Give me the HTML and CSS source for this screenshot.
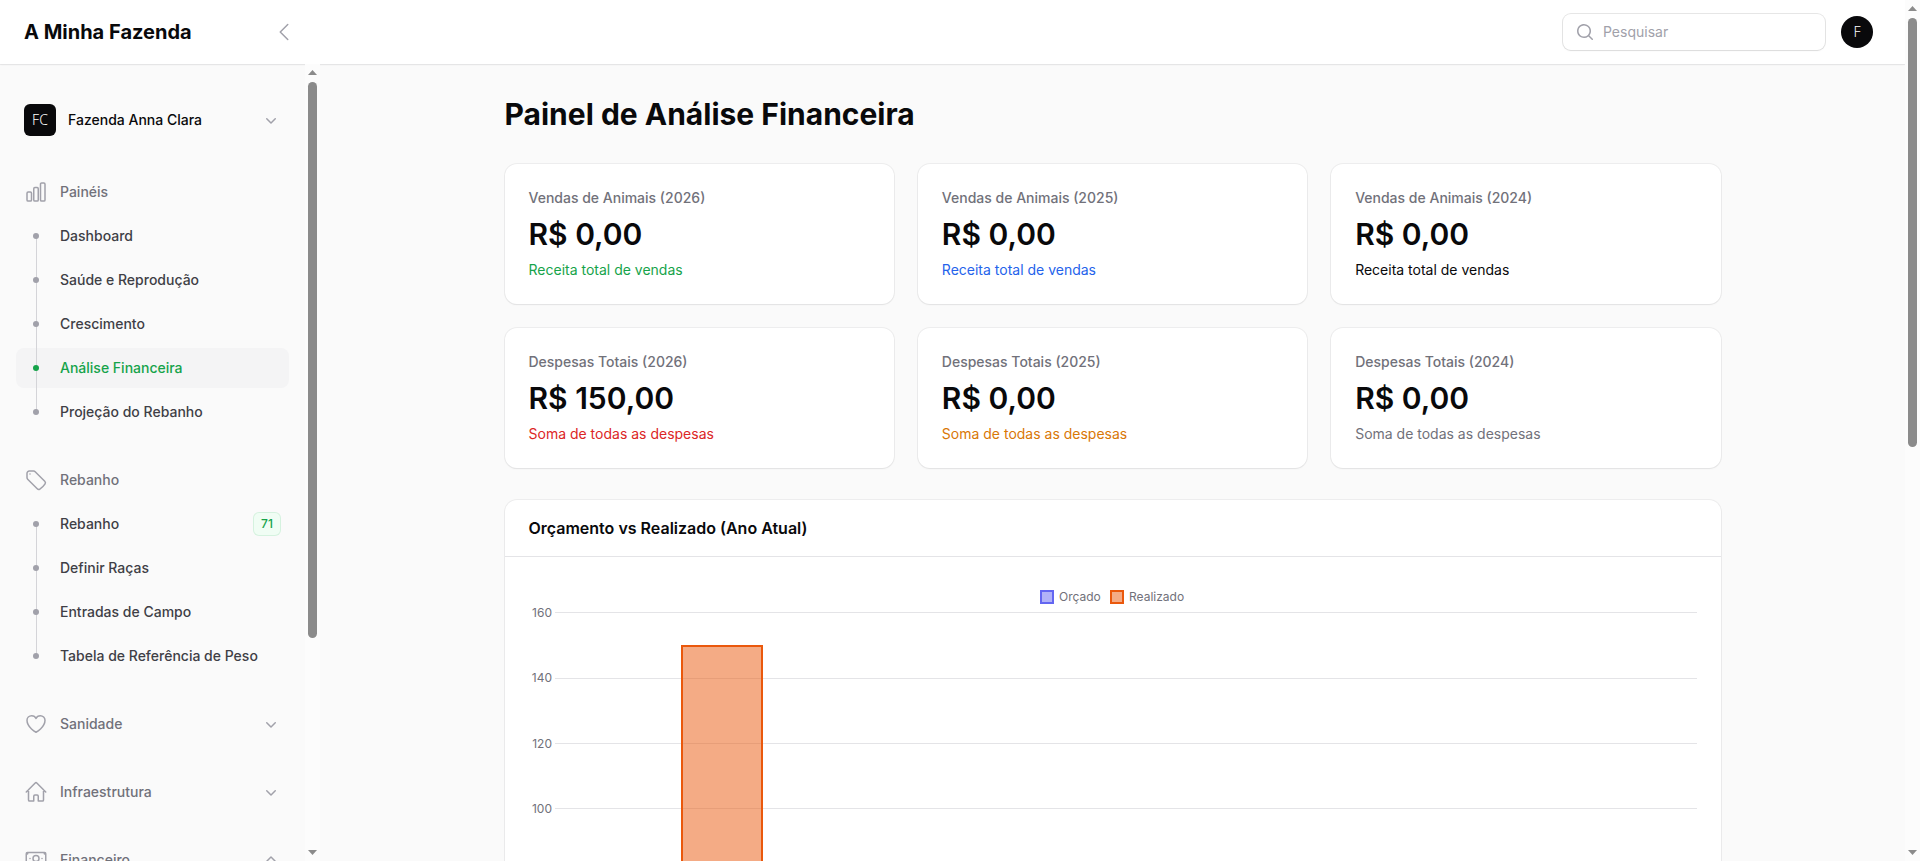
FILE: index.html
```html
<!DOCTYPE html>
<html lang="pt-BR">
<head>
<meta charset="utf-8">
<meta name="viewport" content="width=device-width, initial-scale=1">
<title>Painel de Análise Financeira - A Minha Fazenda</title>
<link rel="stylesheet" href="styles.css">
</head>
<body>
<svg class="sprite" aria-hidden="true">
  <symbol id="chevron-down" viewBox="0 0 20 20"><path fill="currentColor" d="M5.22 8.22a.75.75 0 0 1 1.06 0L10 11.94l3.72-3.72a.75.75 0 1 1 1.06 1.06l-4.25 4.25a.75.75 0 0 1-1.06 0L5.22 9.28a.75.75 0 0 1 0-1.06Z"/></symbol>
</svg>
<div class="app">
  <header class="topbar">
    <div class="brand">
      <a class="brand-name" href="#">A Minha Fazenda</a>
      <button class="icon-button" type="button" aria-label="Recolher barra lateral">
        <svg class="icon-lg" viewBox="0 0 24 24" fill="none" stroke="currentColor" stroke-width="1.5" stroke-linecap="round" stroke-linejoin="round"><path d="M15.75 19.5 8.25 12l7.5-7.5"/></svg>
      </button>
    </div>
    <div class="topbar-end">
      <label class="search">
        <svg class="icon-sm" viewBox="0 0 20 20" fill="currentColor"><path fill-rule="evenodd" d="M9 3.5a5.5 5.5 0 1 0 0 11 5.5 5.5 0 0 0 0-11ZM2 9a7 7 0 1 1 12.452 4.391l3.328 3.329a.75.75 0 1 1-1.06 1.06l-3.329-3.328A7 7 0 0 1 2 9Z"/></svg>
        <input class="search-input" type="search" placeholder="Pesquisar" aria-label="Pesquisar">
      </label>
      <button class="avatar avatar-round" type="button" aria-label="Menu do usuário">F</button>
    </div>
  </header>
  <div class="body">
    <aside class="sidebar">
      <nav class="nav">
        <button class="tenant" type="button">
          <span class="avatar">FC</span>
          <span class="grow">Fazenda Anna Clara</span>
          <svg class="icon-sm"><use href="#chevron-down"/></svg>
        </button>

        <section class="group">
          <div class="group-label">
            <svg class="icon-lg" viewBox="0 0 24 24" fill="none" stroke="currentColor" stroke-width="1.5" stroke-linecap="round" stroke-linejoin="round"><path d="M3 13.125C3 12.504 3.504 12 4.125 12h2.25c.621 0 1.125.504 1.125 1.125v6.75C7.5 20.496 6.996 21 6.375 21h-2.25A1.125 1.125 0 0 1 3 19.875v-6.75ZM9.75 8.625c0-.621.504-1.125 1.125-1.125h2.25c.621 0 1.125.504 1.125 1.125v11.25c0 .621-.504 1.125-1.125 1.125h-2.25a1.125 1.125 0 0 1-1.125-1.125V8.625ZM16.5 4.125c0-.621.504-1.125 1.125-1.125h2.25C20.496 3 21 3.504 21 4.125v15.75c0 .621-.504 1.125-1.125 1.125h-2.25a1.125 1.125 0 0 1-1.125-1.125V4.125Z"/></svg>
            <span class="grow">Painéis</span>
          </div>
          <ul class="items">
            <li><a class="item" href="#"><span class="rail"></span>Dashboard</a></li>
            <li><a class="item" href="#"><span class="rail"></span>Saúde e Reprodução</a></li>
            <li><a class="item" href="#"><span class="rail"></span>Crescimento</a></li>
            <li><a class="item item-active" href="#" aria-current="page"><span class="rail"></span>Análise Financeira</a></li>
            <li><a class="item" href="#"><span class="rail"></span>Projeção do Rebanho</a></li>
          </ul>
        </section>

        <section class="group">
          <div class="group-label">
            <svg class="icon-lg" viewBox="0 0 24 24" fill="none" stroke="currentColor" stroke-width="1.5" stroke-linecap="round" stroke-linejoin="round"><path d="M9.568 3H5.25A2.25 2.25 0 0 0 3 5.25v4.318c0 .597.237 1.17.659 1.591l9.581 9.581c.699.699 1.78.872 2.607.33a18.095 18.095 0 0 0 5.223-5.223c.542-.827.369-1.908-.33-2.607L11.16 3.66A2.25 2.25 0 0 0 9.568 3Z"/><path d="M6 6h.008v.008H6V6Z"/></svg>
            <span class="grow">Rebanho</span>
          </div>
          <ul class="items">
            <li><a class="item" href="#"><span class="rail"></span><span class="grow">Rebanho</span><span class="badge">71</span></a></li>
            <li><a class="item" href="#"><span class="rail"></span>Definir Raças</a></li>
            <li><a class="item" href="#"><span class="rail"></span>Entradas de Campo</a></li>
            <li><a class="item" href="#"><span class="rail"></span>Tabela de Referência de Peso</a></li>
          </ul>
        </section>

        <button class="group-label" type="button">
          <svg class="icon-lg" viewBox="0 0 24 24" fill="none" stroke="currentColor" stroke-width="1.5" stroke-linecap="round" stroke-linejoin="round"><path d="M21 8.25c0-2.485-2.099-4.5-4.688-4.5-1.935 0-3.597 1.126-4.312 2.733-.715-1.607-2.377-2.733-4.313-2.733C5.1 3.75 3 5.765 3 8.25c0 7.22 9 12 9 12s9-4.78 9-12Z"/></svg>
          <span class="grow">Sanidade</span>
          <svg class="icon-sm"><use href="#chevron-down"/></svg>
        </button>
        <button class="group-label" type="button">
          <svg class="icon-lg" viewBox="0 0 24 24" fill="none" stroke="currentColor" stroke-width="1.5" stroke-linecap="round" stroke-linejoin="round"><path d="m2.25 12 8.954-8.955c.44-.439 1.152-.439 1.591 0L21.75 12M4.5 9.75v10.125c0 .621.504 1.125 1.125 1.125H9.75v-4.875c0-.621.504-1.125 1.125-1.125h2.25c.621 0 1.125.504 1.125 1.125V21h4.125c.621 0 1.125-.504 1.125-1.125V9.75"/></svg>
          <span class="grow">Infraestrutura</span>
          <svg class="icon-sm"><use href="#chevron-down"/></svg>
        </button>
        <button class="group-label" type="button" aria-expanded="true">
          <svg class="icon-lg" viewBox="0 0 24 24" fill="none" stroke="currentColor" stroke-width="1.5" stroke-linecap="round" stroke-linejoin="round"><path d="M2.25 18.75a60.07 60.07 0 0 1 15.797 2.101c.727.198 1.453-.342 1.453-1.096V18.75M3.75 4.5v.75A.75.75 0 0 1 3 6h-.75m0 0v-.375c0-.621.504-1.125 1.125-1.125H20.25M2.25 6v9m18-10.5v.75c0 .414.336.75.75.75h.75m-1.5-1.5h.375c.621 0 1.125.504 1.125 1.125v9.75c0 .621-.504 1.125-1.125 1.125h-.375m1.5-1.5H21a.75.75 0 0 0-.75.75v.75m0 0H3.75m0 0h-.375a1.125 1.125 0 0 1-1.125-1.125V15m1.5 1.5v-.75A.75.75 0 0 0 3 15h-.75M15 10.5a3 3 0 1 1-6 0 3 3 0 0 1 6 0Zm3 0h.008v.008H18V10.5Zm-12 0h.008v.008H6V10.5Z"/></svg>
          <span class="grow">Financeiro</span>
          <svg class="icon-sm flipped"><use href="#chevron-down"/></svg>
        </button>
      </nav>
      <div class="scrollbar scrollbar-sidebar" aria-hidden="true">
        <span class="scroll-arrow"></span>
        <span class="scroll-track"><span class="scroll-thumb"></span></span>
        <span class="scroll-arrow scroll-arrow-down"></span>
      </div>
    </aside>

    <main class="main">
      <div class="content">
        <h1 class="title">Painel de Análise Financeira</h1>
        <div class="stats">
          <article class="card stat">
            <h2 class="stat-label">Vendas de Animais (2026)</h2>
            <p class="stat-value">R$ 0,00</p>
            <p class="stat-note green">Receita total de vendas</p>
          </article>
          <article class="card stat">
            <h2 class="stat-label">Vendas de Animais (2025)</h2>
            <p class="stat-value">R$ 0,00</p>
            <p class="stat-note blue">Receita total de vendas</p>
          </article>
          <article class="card stat">
            <h2 class="stat-label">Vendas de Animais (2024)</h2>
            <p class="stat-value">R$ 0,00</p>
            <p class="stat-note">Receita total de vendas</p>
          </article>
          <article class="card stat">
            <h2 class="stat-label">Despesas Totais (2026)</h2>
            <p class="stat-value">R$ 150,00</p>
            <p class="stat-note red">Soma de todas as despesas</p>
          </article>
          <article class="card stat">
            <h2 class="stat-label">Despesas Totais (2025)</h2>
            <p class="stat-value">R$ 0,00</p>
            <p class="stat-note amber">Soma de todas as despesas</p>
          </article>
          <article class="card stat">
            <h2 class="stat-label">Despesas Totais (2024)</h2>
            <p class="stat-value">R$ 0,00</p>
            <p class="stat-note gray">Soma de todas as despesas</p>
          </article>
        </div>
        <section class="card">
          <h2 class="card-heading">Orçamento vs Realizado (Ano Atual)</h2>
          <div class="card-body">
            <svg class="chart" viewBox="0 0 1168 584" role="img" aria-label="Orçamento vs Realizado">
              <g stroke-width="2">
                <rect x="512" y="10" width="12" height="12" fill="#6366f1" fill-opacity=".5" stroke="#6366f1"/>
                <rect x="582" y="10" width="12" height="12" fill="#ea580c" fill-opacity=".5" stroke="#ea580c"/>
              </g>
              <text class="chart-text" x="530" y="20">Orçado</text>
              <text class="chart-text" x="600" y="20">Realizado</text>
              <path class="chart-grid" d="M26 31.5H1168M26 97.5H1168M26 162.5H1168M26 227.5H1168M26 293.5H1168M26 358.5H1168M26 424.5H1168M26 489.5H1168M26 554.5H1168"/>
              <g class="chart-text" text-anchor="end">
                <text x="23" y="36">160</text>
                <text x="23" y="101">140</text>
                <text x="23" y="167">120</text>
                <text x="23" y="232">100</text>
              </g>
              <path d="M152 64H234V554H152Z" fill="#ea580c" fill-opacity=".5"/>
              <path d="M153 554V65H233V554" fill="none" stroke="#ea580c" stroke-width="2"/>
            </svg>
          </div>
        </section>
      </div>
    </main>
  </div>
</div>
<div class="scrollbar" aria-hidden="true">
  <span class="scroll-arrow"></span>
  <span class="scroll-track"><span class="scroll-thumb"></span></span>
  <span class="scroll-arrow scroll-arrow-down"></span>
</div>
</body>
</html>
```

FILE: styles.css
```css
*,
*::before,
*::after {
  box-sizing: border-box;
}

body {
  display: flex;
  height: 100vh;
  margin: 0;
  overflow: hidden;
  background: #fafafa;
  color: #09090b;
  font: 400 14px/20px Inter, "Liberation Sans", sans-serif;
}

h1, h2, p, ul {
  margin: 0;
  padding: 0;
}

ul {
  list-style: none;
}

a {
  color: inherit;
  text-decoration: none;
}

button {
  margin: 0;
  padding: 0;
  border: 0;
  background: none;
  color: inherit;
  font: inherit;
  text-align: left;
  cursor: pointer;
}

.sprite {
  display: none;
}

.grow {
  flex: 1;
}

.icon-sm {
  flex: none;
  width: 20px;
  height: 20px;
  color: #a1a1aa;
}

.icon-lg {
  flex: none;
  display: block;
  width: 24px;
  height: 24px;
  color: #a1a1aa;
}

.flipped {
  transform: rotate(180deg);
}

.app {
  flex: 1;
  display: flex;
  flex-direction: column;
  min-width: 0;
}

/* Top bar */
.topbar {
  z-index: 1;
  flex: none;
  display: flex;
  align-items: center;
  justify-content: space-between;
  height: 64px;
  padding-right: 32px;
  background: #fff;
  box-shadow: 0 0 0 1px rgba(9, 9, 11, .05), 0 1px 2px rgba(0, 0, 0, .05);
}

.brand {
  display: flex;
  align-items: center;
  justify-content: space-between;
  width: 320px;
  padding: 0 24px;
}

.brand-name {
  font-size: 20px;
  font-weight: 700;
  line-height: 20px;
}

.topbar-end {
  display: flex;
  align-items: center;
  gap: 16px;
}

.search {
  display: flex;
  align-items: center;
  gap: 8px;
  width: 262px;
  height: 36px;
  padding: 0 12px;
  border-radius: 8px;
  background: #fff;
  box-shadow: 0 0 0 1px rgba(9, 9, 11, .1), 0 1px 2px rgba(0, 0, 0, .05);
}

.search-input {
  flex: 1;
  min-width: 0;
  padding: 0;
  border: 0;
  outline: 0;
  background: none;
  color: #09090b;
  font: inherit;
}

.search-input::placeholder {
  color: #a1a1aa;
}

.avatar {
  flex: none;
  display: flex;
  align-items: center;
  justify-content: center;
  width: 32px;
  height: 32px;
  border-radius: 6px;
  background: #09090b;
  color: #fff;
  font: 300 14px/20px "Noto Sans", "Open Sans", sans-serif;
}

.avatar-round {
  border-radius: 50%;
}

/* Sidebar */
.body {
  flex: 1;
  display: flex;
  min-height: 0;
}

.sidebar {
  flex: none;
  display: flex;
  width: 320px;
}

.nav {
  flex: 1;
  display: flex;
  flex-direction: column;
  gap: 28px;
  padding: 32px 16px;
  overflow: hidden;
  font-weight: 500;
}

.tenant,
.group-label,
.item {
  flex: none;
  display: flex;
  align-items: center;
  gap: 12px;
  padding: 8px;
  border-radius: 8px;
}

.group-label {
  color: #71717a;
  line-height: 24px;
}

.group,
.items {
  display: flex;
  flex-direction: column;
  gap: 4px;
}

.group {
  flex: none;
}

.item {
  height: 40px;
  color: #3f3f46;
}

.item-active {
  background: #f4f4f5;
  color: #16a34a;
}

.rail {
  position: relative;
  display: flex;
  align-items: center;
  justify-content: center;
  width: 24px;
  height: 24px;
}

.rail::before {
  content: "";
  position: absolute;
  top: -10px;
  bottom: -10px;
  left: 12px;
  width: 1px;
  background: #d4d4d8;
}

.rail::after {
  content: "";
  position: relative;
  width: 6px;
  height: 6px;
  border-radius: 50%;
  background: #a1a1aa;
}

li:first-child .rail::before {
  top: 50%;
}

li:last-child .rail::before {
  bottom: 50%;
}

.item-active .rail::after {
  background: #16a34a;
}

.badge {
  min-width: 28px;
  padding: 4px 6px;
  border-radius: 6px;
  background: #f0fdf4;
  box-shadow: inset 0 0 0 1px rgba(22, 163, 74, .12);
  color: #16a34a;
  font-size: 12px;
  line-height: 16px;
  text-align: center;
}

/* Scrollbars */
.scrollbar {
  position: relative;
  z-index: 2;
  flex: none;
  display: flex;
  flex-direction: column;
  width: 15px;
  background: #fcfcfc;
}

.scroll-arrow {
  display: flex;
  justify-content: center;
  height: 18px;
  padding-top: 6px;
}

.scroll-arrow::before {
  content: "";
  width: 9px;
  height: 5px;
  background: #8b8b8b;
  clip-path: polygon(50% 0, 100% 100%, 0 100%);
}

.scroll-arrow-down {
  transform: rotate(180deg);
}

.scroll-track {
  flex: 1;
  padding: 0 3px;
}

.scroll-thumb {
  display: block;
  height: 52%;
  border-radius: 5px;
  background: #8b8b8b;
}

.scrollbar-sidebar .scroll-thumb {
  height: 73%;
}

/* Content */
.main {
  flex: 1;
  min-width: 0;
  overflow: hidden;
}

.content {
  display: flex;
  flex-direction: column;
  gap: 32px;
  max-width: 1280px;
  margin: 0 auto;
  padding: 32px;
}

.title {
  font-size: 30px;
  font-weight: 700;
  line-height: 36px;
}

.stats {
  display: grid;
  grid-template-columns: repeat(3, 1fr);
  gap: 24px;
}

.card {
  border-radius: 12px;
  background: #fff;
  box-shadow: 0 0 0 1px rgba(9, 9, 11, .05), 0 1px 2px rgba(0, 0, 0, .05);
}

.stat {
  display: grid;
  gap: 8px;
  padding: 24px;
}

.stat-label {
  color: #71717a;
  font-size: 14px;
  font-weight: 500;
}

.stat-value {
  font-size: 30px;
  font-weight: 600;
  line-height: 36px;
}

.green { color: #16a34a; }
.blue { color: #2563eb; }
.red { color: #dc2626; }
.amber { color: #d97706; }
.gray { color: #71717a; }

.card-heading {
  padding: 16px 24px;
  font-size: 16px;
  font-weight: 600;
  line-height: 24px;
}

.card-body {
  padding: 24px;
  border-top: 1px solid #e4e4e7;
}

.chart {
  display: block;
  width: 100%;
}

.chart-text {
  fill: #71717a;
  font-size: 12px;
}

.chart-grid {
  fill: none;
  stroke: #e4e4e7;
}
```
